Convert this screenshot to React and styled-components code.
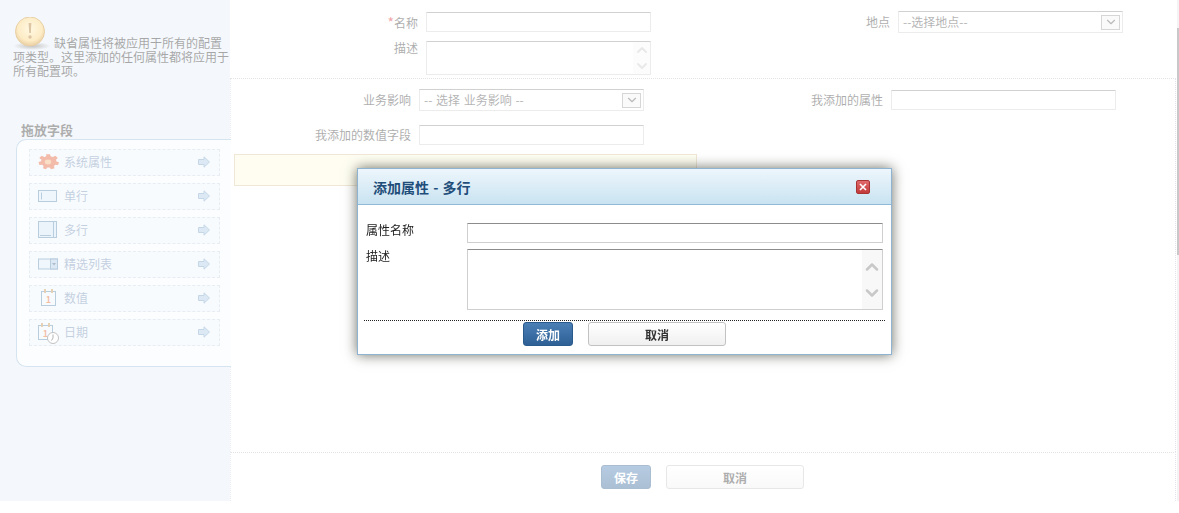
import React from 'react'
import styled, { createGlobalStyle } from 'styled-components'
import { ChevronDown, ChevronUp } from 'lucide-react'

const GlobalStyle = createGlobalStyle`
  html, body {
    margin: 0;
    background: #fff;
    overflow: hidden;
  }
  body, input, textarea, button {
    font-family: "Noto Sans CJK SC", "Liberation Sans", sans-serif;
    font-size: 12px;
    color: #333;
  }
`

const Page = styled.div`
  display: flex;
  width: 1179px;
  height: 501px;
`

const Sidebar = styled.aside`
  box-sizing: border-box;
  flex: 0 0 230px;
  min-width: 0;
  background: #e4edf7;
  padding: 17px 0 0 13px;
`

const Notice = styled.p`
  margin: 0;
  height: 100px;
  line-height: 14px;
  color: #222;
`

const NoticeIcon = styled.svg`
  width: 37px;
  height: 33px;
  margin: 0 3px 0 1px;
  vertical-align: -2px;
`

const FieldsTitle = styled.h3`
  margin: 5px 0 0 8px;
  height: 17px;
  line-height: 16px;
  font-size: 13px;
  font-weight: 700;
  color: #333;
`

const FieldsPanel = styled.div`
  box-sizing: border-box;
  position: relative;
  display: flex;
  flex-direction: column;
  gap: 7px;
  width: 215px;
  height: 228px;
  margin: 0 0 0 3px;
  padding: 9px 11px 0 12px;
  background: #f6faff;
  border: 1px solid #96bbd7;
  border-right: 0;
  border-radius: 10px 0 0 10px;
`

const FieldItem = styled.div`
  box-sizing: border-box;
  display: flex;
  align-items: center;
  height: 27px;
  padding: 0 9px 2px 6px;
  background: #eef5fd;
  border: 1px dashed #c5d3e2;
  color: #6a8ab0;
`

const FieldIcon = styled.svg`
  flex: 0 0 24px;
  width: 24px;
  height: 24px;
  margin-right: 4px;
`

const FieldArrow = styled.svg`
  width: 12px;
  height: 12px;
  margin-left: auto;
`

const Main = styled.main`
  display: flex;
  flex: 0 0 946px;
  flex-direction: column;
`

const FormGrid = styled.section`
  display: grid;
  grid-template-columns: ${props => props.$labelWidth}px 225px 231px 225px;
  column-gap: 8px;
  row-gap: ${props => props.$rowGap}px;
  align-items: center;
  align-content: start;
  padding-left: 1px;
`

const TopForm = styled(FormGrid)`
  box-sizing: border-box;
  height: 79px;
  padding-top: 11px;
  border-bottom: 1px dotted #bbb;
`

const LowerArea = styled.div`
  flex: 1;
  border-left: 1px dotted #c5d3e2;
  border-right: 1px dotted #b8b8d8;
  padding-top: 10px;
`

const Label = styled.label`
  align-self: ${props => (props.$top ? 'start' : 'center')};
  line-height: 14px;
  text-align: right;
  color: #333;
`

const Required = styled.span`
  font-size: 14px;
  color: #d8222a;
`

const TextInput = styled.input`
  box-sizing: border-box;
  width: 100%;
  height: 20px;
  padding: 0 4px;
  background: #fff;
  border: 1px solid #cfcfcf;
  border-top-color: #8c8c8c;
  border-radius: 1px;
  outline: none;
`

const TextArea = styled.div`
  box-sizing: border-box;
  display: flex;
  height: ${props => props.$height}px;
  background: #fff;
  border: 1px solid #cfcfcf;
  border-top-color: #8c8c8c;
  border-radius: 1px;
`

const TextAreaField = styled.textarea`
  flex: 1;
  min-width: 0;
  padding: 2px 4px;
  background: transparent;
  border: 0;
  outline: none;
  resize: none;
  overflow: hidden;
`

const ScrollGutter = styled.div`
  display: flex;
  flex: 0 0 17px;
  flex-direction: column;
  align-items: center;
  justify-content: center;
  gap: ${props => props.$gap}px;
  background: #f8f8f8;
  color: #c8c8c8;
`

const SelectBox = styled.div`
  box-sizing: border-box;
  display: flex;
  align-items: center;
  justify-content: space-between;
  height: 22px;
  padding: 0 2px 0 4px;
  background: #fff;
  border: 1px solid #cfcfcf;
  border-top-color: #8c8c8c;
  line-height: 20px;
  color: #444;
  white-space: pre;
  word-spacing: 1px;
`

const SelectButton = styled.span`
  box-sizing: border-box;
  display: flex;
  align-items: center;
  justify-content: center;
  width: 19px;
  height: 15px;
  background: #f2f2f2;
  border: 1px solid #999;
  color: #555;
`

const WarningBar = styled.div`
  box-sizing: border-box;
  width: 463px;
  height: 32px;
  margin: 9px 0 0 3px;
  background: #fffbdd;
  border: 1px solid #d9c49a;
`

const Footer = styled.footer`
  display: flex;
  flex: 0 0 49px;
  box-sizing: border-box;
  justify-content: center;
  gap: 15px;
  padding: 12px 1px 0 0;
  border-top: 1px dotted #bbb;
  border-left: 1px dotted #c5d3e2;
  border-right: 1px dotted #b8b8d8;
`

const Scroller = styled.div`
  flex: 0 0 2px;
  margin-left: 1px;
  background: #e0e0e0;
`

const ScrollThumb = styled.div`
  height: 227px;
  margin-top: 28px;
  background: #777;
`

const PrimaryButton = styled.button`
  box-sizing: border-box;
  width: 50px;
  height: 24px;
  padding: 0;
  background: linear-gradient(#4a7fb5, #2e6095);
  border: 1px solid #2b5a8c;
  border-radius: 3px;
  color: #fff;
  font-weight: 700;
`

const PlainButton = styled.button`
  box-sizing: border-box;
  width: 138px;
  height: 24px;
  padding: 0;
  background: linear-gradient(#fff, #f0f0f0);
  border: 1px solid #c2c2c2;
  border-radius: 3px;
  color: #333;
  font-weight: 700;
`

const Overlay = styled.div`
  position: fixed;
  inset: 0;
  background: rgba(255, 255, 255, 0.6);
`

const Dialog = styled.div`
  position: fixed;
  left: 357px;
  top: 168px;
  box-sizing: border-box;
  width: 535px;
  height: 187px;
  background: #fff;
  border: 1px solid #8fb4d2;
  box-shadow: 0 0 12px rgba(30, 30, 20, 0.65);
`

const DialogHeader = styled.header`
  box-sizing: border-box;
  display: flex;
  align-items: center;
  justify-content: space-between;
  height: 36px;
  padding: 0 21px 0 15px;
  background: linear-gradient(#edf6fc, #c9e3f1);
  border-bottom: 1px solid #8fb9d9;
`

const DialogTitle = styled.h2`
  margin: 0;
  font-size: 14px;
  font-weight: 700;
  word-spacing: 1px;
  color: #1f4e7a;
`

const CloseButton = styled.button`
  display: flex;
  align-items: center;
  justify-content: center;
  box-sizing: border-box;
  width: 14px;
  height: 14px;
  padding: 0;
  background: linear-gradient(#e06a6a, #c23a3a);
  border: 1px solid #a83434;
  border-radius: 2px;
`

const DialogForm = styled.div`
  display: grid;
  grid-template-columns: 101px 416px;
  row-gap: 6px;
  padding: 18px 0 0 8px;
`

const DialogLabel = styled.label`
  line-height: 14px;
  color: #222;
`

const DialogFooter = styled.div`
  display: flex;
  justify-content: center;
  gap: 15px;
  height: 26px;
  margin: 10px 6px 0;
  padding-top: 1px;
  border-top: 1px dotted #222;
`

function GearIcon () {
  return (
    <FieldIcon viewBox="0 0 24 24">
      <g transform="translate(0 2.6) scale(1 .78)">
        <path fill="#e0572c" d="M10 2h4l.6 2.8 2.2.9L19.4 4l2.4 3-1.8 2.2.5 2.1 2.5 1-.9 3.6-2.8-.2-1.4 1.7.7 2.7-3.5 1.4-1.5-2.3h-2.2l-1.5 2.3L6.9 20l.7-2.7-1.4-1.7-2.8.2-.9-3.6 2.5-1 .5-2.1L3.2 7l2.4-3 2.6 1.7 2.2-.9z" />
        <circle cx="12" cy="12" r="3.2" fill="#f0b070" />
      </g>
    </FieldIcon>
  )
}

function SingleLineIcon () {
  return (
    <FieldIcon viewBox="0 0 24 24">
      <rect x="2.5" y="6.5" width="18" height="11" fill="#d8e9f8" stroke="#4f82ad" />
      <path d="M5.5 8.5v7" stroke="#4f82ad" />
    </FieldIcon>
  )
}

function MultiLineIcon () {
  return (
    <FieldIcon viewBox="0 0 24 24">
      <rect x="2.5" y="3.5" width="18" height="16" fill="#d0e4f6" stroke="#4f82ad" />
      <path d="M17.5 4v15M4 17.5h11" stroke="#4f82ad" />
    </FieldIcon>
  )
}

function DropdownIcon () {
  return (
    <FieldIcon viewBox="0 0 24 24">
      <rect x="2.5" y="7" width="19" height="10" fill="#d8e9f8" stroke="#4f82ad" />
      <rect x="14.5" y="7" width="7" height="10" fill="#a8c6e2" stroke="#4f82ad" />
      <path d="M16 11h4l-2 2.5z" fill="#2f5a86" />
    </FieldIcon>
  )
}

function CalendarIcon ({ withClock }) {
  const x = withClock ? -1 : 2
  return (
    <FieldIcon viewBox="0 0 24 24">
      <g transform={`translate(${x} 0)`}>
        <rect x="3.5" y="5.5" width="14" height="14" fill="#eef5fc" stroke="#4f82ad" />
        <path d="M7 3v4M14 3v4" stroke="#bd8434" strokeWidth="1.8" />
        <text x="10.5" y="16.5" fontSize="9" fontWeight="700" textAnchor="middle" fill="#e0601f">1</text>
      </g>
      {withClock && (
        <g>
          <circle cx="17" cy="18" r="5.5" fill="#fff" stroke="#666" />
          <path d="M17 14.5V18l-1.5 2.5" fill="none" stroke="#444" />
        </g>
      )}
    </FieldIcon>
  )
}

const fieldTypes = [
  { name: '系统属性', icon: <GearIcon /> },
  { name: '单行', icon: <SingleLineIcon /> },
  { name: '多行', icon: <MultiLineIcon /> },
  { name: '精选列表', icon: <DropdownIcon /> },
  { name: '数值', icon: <CalendarIcon /> },
  { name: '日期', icon: <CalendarIcon withClock /> }
]

export default function App () {
  return (
    <>
      <GlobalStyle />
      <Page>
        <Sidebar>
          <Notice>
            <NoticeIcon viewBox="0 0 37 33">
              <defs>
                <radialGradient id="noticeFill" cx="50%" cy="40%" r="60%">
                  <stop offset="0%" stopColor="#ffeeb8" />
                  <stop offset="70%" stopColor="#f9cf6e" />
                  <stop offset="100%" stopColor="#c98218" />
                </radialGradient>
                <radialGradient id="noticeShadow">
                  <stop offset="0%" stopColor="#666" />
                  <stop offset="100%" stopColor="#666" stopOpacity="0" />
                </radialGradient>
              </defs>
              <ellipse cx="18" cy="29" rx="19" ry="4" fill="url(#noticeShadow)" />
              <circle cx="16" cy="14.5" r="14.5" fill="url(#noticeFill)" stroke="#c58a24" />
              <path d="M14.6 6h2.8l-.6 10h-1.6z" fill="#a8721a" />
              <circle cx="16" cy="20" r="1.7" fill="#a8721a" />
            </NoticeIcon>
            缺省属性将被应用于所有的配置项类型。这里添加的任何属性都将应用于所有配置项。
          </Notice>
          <FieldsTitle>拖放字段</FieldsTitle>
          <FieldsPanel>
            {fieldTypes.map(field => (
              <FieldItem key={field.name}>
                {field.icon}
                {field.name}
                <FieldArrow viewBox="0 0 12 12">
                  <path d="M.5 3.5h5.5V.8L11.5 6 6 11.2V8.5H.5z" fill="#a9c7e4" stroke="#6f9ac0" />
                </FieldArrow>
              </FieldItem>
            ))}
          </FieldsPanel>
        </Sidebar>
        <Main>
          <TopForm $labelWidth={187} $rowGap={8}>
            <Label><Required>*</Required>名称</Label>
            <TextInput />
            <Label>地点</Label>
            <SelectBox>
              --选择地点--
              <SelectButton><ChevronDown size={14} /></SelectButton>
            </SelectBox>
            <Label $top>描述</Label>
            <TextArea $height={34}>
              <TextAreaField />
              <ScrollGutter $gap={0}>
                <ChevronUp size={16} strokeWidth={3} />
                <ChevronDown size={16} strokeWidth={3} />
              </ScrollGutter>
            </TextArea>
          </TopForm>
          <LowerArea>
            <FormGrid $labelWidth={179} $rowGap={14}>
              <Label>业务影响</Label>
              <SelectBox>
                -- 选择 业务影响 --
                <SelectButton><ChevronDown size={14} /></SelectButton>
              </SelectBox>
              <Label>我添加的属性</Label>
              <TextInput />
              <Label>我添加的数值字段</Label>
              <TextInput />
            </FormGrid>
            <WarningBar />
          </LowerArea>
          <Footer>
            <PrimaryButton>保存</PrimaryButton>
            <PlainButton>取消</PlainButton>
          </Footer>
        </Main>
        <Scroller>
          <ScrollThumb />
        </Scroller>
      </Page>
      <Overlay />
      <Dialog>
        <DialogHeader>
          <DialogTitle>添加属性 - 多行</DialogTitle>
          <CloseButton>
            <svg width="8" height="8" viewBox="0 0 8 8">
              <path d="M1 1l6 6M7 1L1 7" stroke="#fff" strokeWidth="1.6" />
            </svg>
          </CloseButton>
        </DialogHeader>
        <DialogForm>
          <DialogLabel>属性名称</DialogLabel>
          <TextInput />
          <DialogLabel>描述</DialogLabel>
          <TextArea $height={61}>
            <TextAreaField />
            <ScrollGutter $gap={6}>
              <ChevronUp size={20} strokeWidth={3} />
              <ChevronDown size={20} strokeWidth={3} />
            </ScrollGutter>
          </TextArea>
        </DialogForm>
        <DialogFooter>
          <PrimaryButton>添加</PrimaryButton>
          <PlainButton>取消</PlainButton>
        </DialogFooter>
      </Dialog>
    </>
  )
}
